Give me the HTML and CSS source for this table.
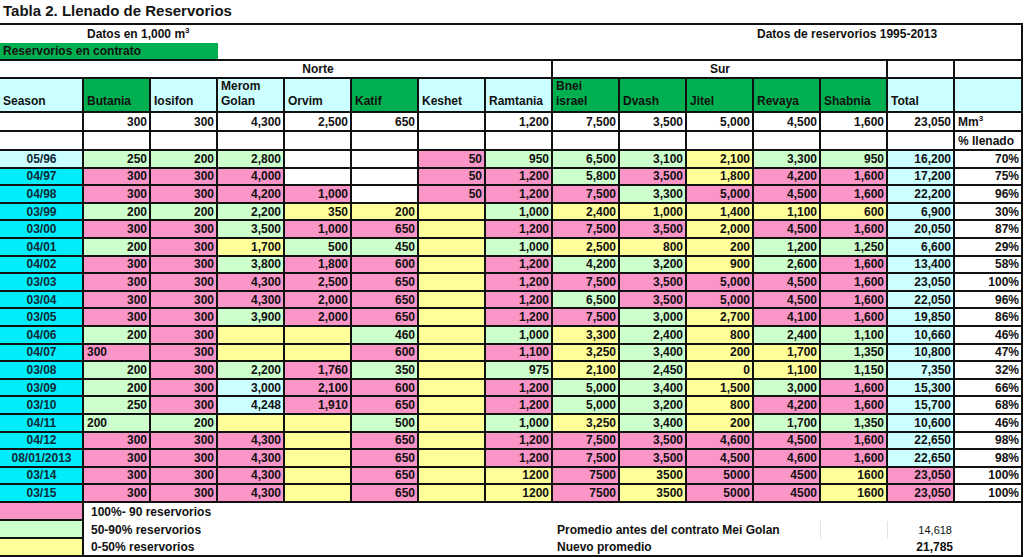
FILE: index.html
```html
<!DOCTYPE html>
<html lang="es">
<head>
<meta charset="utf-8">
<title>Tabla 2. Llenado de Reservorios</title>
<link rel="stylesheet" href="styles.css">
</head>
<body>
<div class="title">Tabla 2. Llenado de Reservorios</div>
<table class="sheet">
<colgroup>
<col class="cs"><col class="cn"><col class="cn"><col class="cn"><col class="cn"><col class="cn"><col class="cn"><col class="cn"><col class="cn"><col class="cn"><col class="cn"><col class="cn"><col class="cn"><col class="cn"><col class="cl">
</colgroup>
<tbody>
<tr class="h18">
<td class="nb nbb"></td>
<td class="nb nbb l" colspan="10">Datos en 1,000 m<sup>3</sup></td>
<td class="nbb l" colspan="4">Datos de reservorios 1995-2013</td>
</tr>
<tr class="h18">
<td class="nb l dg" colspan="3">Reservorios en contrato</td>
<td colspan="12"></td>
</tr>
<tr class="h18">
<td class="nb"></td>
<td class="ctr" colspan="7">Norte</td>
<td class="ctr" colspan="5">Sur</td>
<td></td>
<td></td>
</tr>
<tr class="h34 hdr">
<td class="c">Season</td>
<td class="dg">Butania</td>
<td class="c">Iosifon</td>
<td class="c">Merom<br>Golan</td>
<td class="c">Orvim</td>
<td class="dg">Katif</td>
<td class="c">Keshet</td>
<td class="c">Ramtania</td>
<td class="dg">Bnei<br>israel</td>
<td class="dg">Dvash</td>
<td class="dg">Jitel</td>
<td class="dg">Revaya</td>
<td class="dg">Shabnia</td>
<td class="c">Total</td>
<td class="c"></td>
</tr>
<tr class="h19">
<td></td><td>300</td><td>300</td><td>4,300</td><td>2,500</td><td>650</td><td></td><td>1,200</td><td>7,500</td><td>3,500</td><td>5,000</td><td>4,500</td><td>1,600</td><td>23,050</td><td class="l">Mm<sup>3</sup></td>
</tr>
<tr class="h19">
<td></td><td></td><td></td><td></td><td></td><td></td><td></td><td></td><td></td><td></td><td></td><td></td><td></td><td></td><td class="l">% llenado</td>
</tr>
<tr class="d"><td class="c ctr">05/96</td><td class="g">250</td><td class="g">200</td><td class="g">2,800</td><td></td><td></td><td class="p">50</td><td class="g">950</td><td class="g">6,500</td><td class="g">3,100</td><td class="y">2,100</td><td class="g">3,300</td><td class="g">950</td><td class="c">16,200</td><td>70%</td></tr>
<tr class="d"><td class="s">04/97</td><td class="p">300</td><td class="p">300</td><td class="p">4,000</td><td></td><td></td><td class="p">50</td><td class="p">1,200</td><td class="g">5,800</td><td class="p">3,500</td><td class="y">1,800</td><td class="p">4,200</td><td class="p">1,600</td><td class="c">17,200</td><td>75%</td></tr>
<tr class="d"><td class="s">04/98</td><td class="p">300</td><td class="p">300</td><td class="p">4,200</td><td class="p">1,000</td><td></td><td class="p">50</td><td class="p">1,200</td><td class="p">7,500</td><td class="g">3,300</td><td class="p">5,000</td><td class="p">4,500</td><td class="p">1,600</td><td class="c">22,200</td><td>96%</td></tr>
<tr class="d"><td class="s">03/99</td><td class="g">200</td><td class="g">200</td><td class="g">2,200</td><td class="y">350</td><td class="y">200</td><td class="y"></td><td class="g">1,000</td><td class="y">2,400</td><td class="y">1,000</td><td class="y">1,400</td><td class="y">1,100</td><td class="y">600</td><td class="c">6,900</td><td>30%</td></tr>
<tr class="d"><td class="s">03/00</td><td class="p">300</td><td class="p">300</td><td class="g">3,500</td><td class="p">1,000</td><td class="p">650</td><td class="y"></td><td class="p">1,200</td><td class="p">7,500</td><td class="p">3,500</td><td class="y">2,000</td><td class="p">4,500</td><td class="p">1,600</td><td class="c">20,050</td><td>87%</td></tr>
<tr class="d"><td class="s">04/01</td><td class="g">200</td><td class="p">300</td><td class="y">1,700</td><td class="g">500</td><td class="g">450</td><td class="y"></td><td class="g">1,000</td><td class="y">2,500</td><td class="y">800</td><td class="y">200</td><td class="g">1,200</td><td class="g">1,250</td><td class="c">6,600</td><td>29%</td></tr>
<tr class="d"><td class="s">04/02</td><td class="p">300</td><td class="p">300</td><td class="g">3,800</td><td class="p">1,800</td><td class="p">600</td><td class="y"></td><td class="p">1,200</td><td class="g">4,200</td><td class="g">3,200</td><td class="y">900</td><td class="g">2,600</td><td class="p">1,600</td><td class="c">13,400</td><td>58%</td></tr>
<tr class="d"><td class="s">03/03</td><td class="p">300</td><td class="p">300</td><td class="p">4,300</td><td class="p">2,500</td><td class="p">650</td><td class="y"></td><td class="p">1,200</td><td class="p">7,500</td><td class="p">3,500</td><td class="p">5,000</td><td class="p">4,500</td><td class="p">1,600</td><td class="c">23,050</td><td>100%</td></tr>
<tr class="d"><td class="s">03/04</td><td class="p">300</td><td class="p">300</td><td class="p">4,300</td><td class="p">2,000</td><td class="p">650</td><td class="y"></td><td class="p">1,200</td><td class="g">6,500</td><td class="p">3,500</td><td class="p">5,000</td><td class="p">4,500</td><td class="p">1,600</td><td class="c">22,050</td><td>96%</td></tr>
<tr class="d"><td class="s">03/05</td><td class="p">300</td><td class="p">300</td><td class="g">3,900</td><td class="p">2,000</td><td class="p">650</td><td class="y"></td><td class="p">1,200</td><td class="p">7,500</td><td class="g">3,000</td><td class="y">2,700</td><td class="p">4,100</td><td class="p">1,600</td><td class="c">19,850</td><td>86%</td></tr>
<tr class="d"><td class="s">04/06</td><td class="g">200</td><td class="p">300</td><td class="y"></td><td class="y"></td><td class="g">460</td><td class="y"></td><td class="g">1,000</td><td class="y">3,300</td><td class="g">2,400</td><td class="y">800</td><td class="g">2,400</td><td class="g">1,100</td><td class="c">10,660</td><td>46%</td></tr>
<tr class="d"><td class="s">04/07</td><td class="p l">300</td><td class="p">300</td><td class="y"></td><td class="y"></td><td class="p">600</td><td class="y"></td><td class="p">1,100</td><td class="y">3,250</td><td class="g">3,400</td><td class="y">200</td><td class="y">1,700</td><td class="g">1,350</td><td class="c">10,800</td><td>47%</td></tr>
<tr class="d"><td class="s">03/08</td><td class="g">200</td><td class="p">300</td><td class="g">2,200</td><td class="p">1,760</td><td class="g">350</td><td class="y"></td><td class="g">975</td><td class="y">2,100</td><td class="g">2,450</td><td class="y">0</td><td class="y">1,100</td><td class="g">1,150</td><td class="c">7,350</td><td>32%</td></tr>
<tr class="d"><td class="s">03/09</td><td class="g">200</td><td class="p">300</td><td class="c">3,000</td><td class="p">2,100</td><td class="p">600</td><td class="y"></td><td class="p">1,200</td><td class="g">5,000</td><td class="g">3,400</td><td class="y">1,500</td><td class="g">3,000</td><td class="p">1,600</td><td class="c">15,300</td><td>66%</td></tr>
<tr class="d"><td class="s">03/10</td><td class="g">250</td><td class="p">300</td><td class="c">4,248</td><td class="p">1,910</td><td class="p">650</td><td class="y"></td><td class="p">1,200</td><td class="g">5,000</td><td class="g">3,200</td><td class="y">800</td><td class="p">4,200</td><td class="p">1,600</td><td class="c">15,700</td><td>68%</td></tr>
<tr class="d"><td class="s">04/11</td><td class="g l">200</td><td class="g">200</td><td class="y"></td><td class="y"></td><td class="g">500</td><td class="y"></td><td class="g">1,000</td><td class="y">3,250</td><td class="g">3,400</td><td class="y">200</td><td class="g">1,700</td><td class="g">1,350</td><td class="c">10,600</td><td>46%</td></tr>
<tr class="d"><td class="s">04/12</td><td class="p">300</td><td class="p">300</td><td class="p">4,300</td><td class="y"></td><td class="p">650</td><td class="y"></td><td class="p">1,200</td><td class="p">7,500</td><td class="p">3,500</td><td class="p">4,600</td><td class="p">4,500</td><td class="p">1,600</td><td class="c">22,650</td><td>98%</td></tr>
<tr class="d"><td class="s">08/01/2013</td><td class="p">300</td><td class="p">300</td><td class="p">4,300</td><td class="y"></td><td class="p">650</td><td class="y"></td><td class="p">1,200</td><td class="p">7,500</td><td class="p">3,500</td><td class="p">4,500</td><td class="p">4,600</td><td class="p">1,600</td><td class="c">22,650</td><td>98%</td></tr>
<tr class="d"><td class="s">03/14</td><td class="p">300</td><td class="p">300</td><td class="p">4,300</td><td class="y"></td><td class="p">650</td><td class="y"></td><td class="y">1200</td><td class="p">7500</td><td class="y">3500</td><td class="p">5000</td><td class="p">4500</td><td class="y">1600</td><td class="p">23,050</td><td>100%</td></tr>
<tr class="d"><td class="s">03/15</td><td class="p">300</td><td class="p">300</td><td class="p">4,300</td><td class="y"></td><td class="p">650</td><td class="y"></td><td class="y">1200</td><td class="p">7500</td><td class="y">3500</td><td class="p">5000</td><td class="p">4500</td><td class="y">1600</td><td class="p">23,050</td><td>100%</td></tr>
<tr class="h18">
<td class="p"></td>
<td class="nb nbb l lg" colspan="7">100%- 90 reservorios</td>
<td class="nb nbb" colspan="6"></td>
<td class="nbb"></td>
</tr>
<tr class="h18">
<td class="g"></td>
<td class="nb nbb l lg" colspan="7">50-90% reservorios</td>
<td class="nb nbb l pr faint" colspan="4">Promedio antes del contrato Mei Golan</td>
<td class="nb nbb faint"></td>
<td class="nb nbb avg">14,618</td>
<td class="nbb"></td>
</tr>
<tr class="h18">
<td class="y"></td>
<td class="nb l lg" colspan="7">0-50% reservorios</td>
<td class="nb l pr" colspan="5">Nuevo promedio</td>
<td class="nb">21,785</td>
<td></td>
</tr>
</tbody>
</table>
</body>
</html>
```
FILE: styles.css
```css
* {
  box-sizing: border-box;
}

html, body {
  margin: 0;
  padding: 0;
  background: #ffffff;
}

body {
  width: 1024px;
  height: 557px;
  overflow: hidden;
  font-family: "Liberation Sans", Arial, sans-serif;
  font-weight: bold;
  font-size: 12px;
  color: #111111;
}

.title {
  height: 23px;
  padding-left: 3px;
  font-size: 15px;
  line-height: 22px;
  font-weight: bold;
  color: #151515;
}

.sheet {
  border-collapse: separate;
  border-spacing: 0;
  table-layout: fixed;
  width: 1023px;
  border-top: 2px solid #111;
}

.cs { width: 84px; }
.cn { width: 67px; }
.cl { width: 68px; }

.sheet td {
  padding: 0 2px 0 3px;
  text-align: right;
  vertical-align: middle;
  border-right: 2px solid #111;
  border-bottom: 2px solid #111;
  line-height: 14px;
  white-space: nowrap;
  overflow: hidden;
}

.sheet td.nb { border-right: none; }
.sheet td.nbb { border-bottom: none; }
.sheet td.l { text-align: left; }
.sheet td.ctr { text-align: center; }

.sheet sup {
  font-size: 8px;
  line-height: 0;
  vertical-align: 5px;
}

.h18 { height: 18px; }
.h19 { height: 19px; }
.h34 { height: 34px; }
.d { height: 17.6px; }

.hdr td {
  text-align: left;
  vertical-align: bottom;
  padding-bottom: 2px;
  line-height: 15px;
  font-size: 12px;
}

.sheet td.p { background: #fa95c8; }
.sheet td.g { background: #ccffcc; }
.sheet td.y { background: #ffff99; }
.sheet td.c { background: #ccffff; }
.sheet td.dg { background: #00b050; }
.sheet td.s {
  background: #00eefb;
  text-align: center;
  color: #0d2a36;
}
.sheet td.c.ctr { color: #0d2a36; }

.sheet td.lg { padding-left: 7px; }
.sheet td.pr { padding-left: 4px; }
.sheet td.faint { border-right: 1px solid #e2e2e2; }
.sheet td.avg {
  font-weight: normal;
  font-size: 11px;
  padding-right: 3px;
}
```
